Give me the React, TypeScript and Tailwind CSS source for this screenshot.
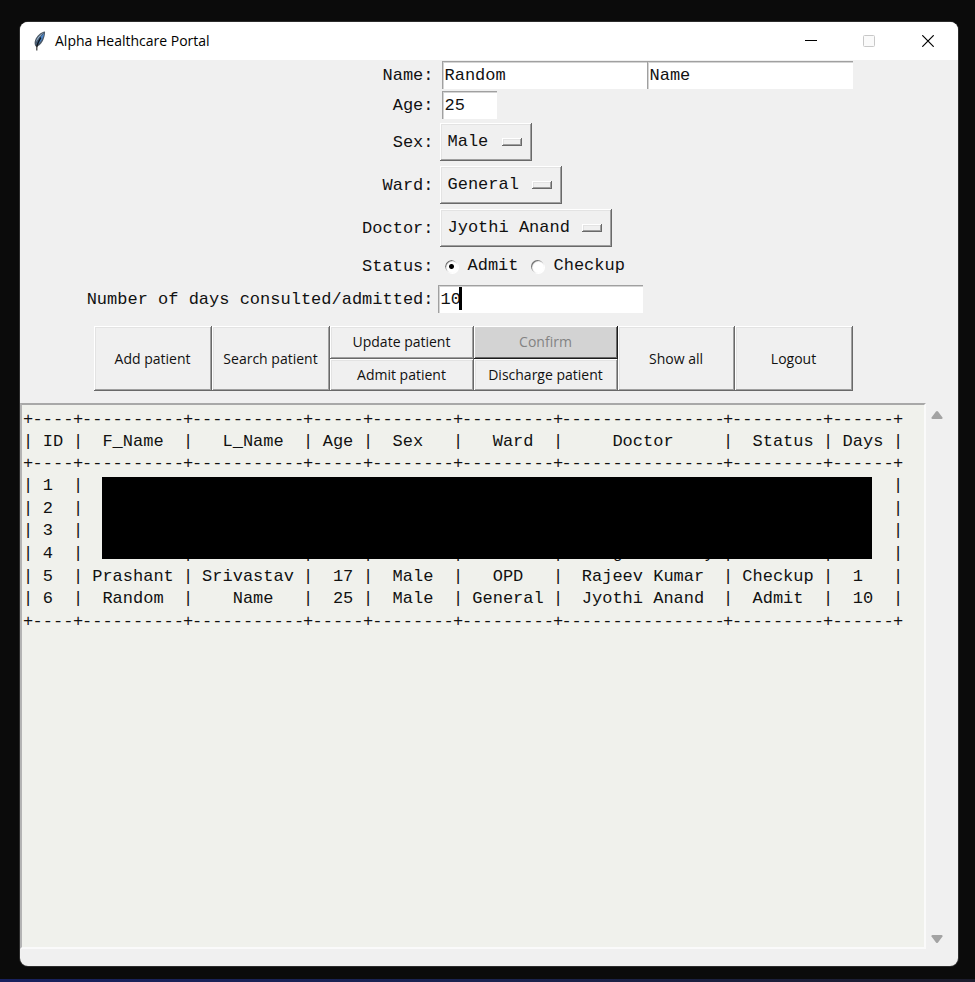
import { useState } from "react";
import type { ReactNode } from "react";

const raised =
  "bg-[#f0f0f0] shadow-[inset_-1px_-1px_#696969,inset_1px_1px_#ffffff,inset_-2px_-2px_#a0a0a0,inset_2px_2px_#e3e3e3]";
const sunken =
  "h-7 rounded-none border-0 bg-white pl-[3px] outline-none shadow-[inset_1px_1px_#a0a0a0,inset_2px_2px_#d4d4d4]";
const mono = "font-['Liberation_Mono',monospace] text-[17px] leading-[22px]";

const widths = [
  "w-[40px]",
  "w-[100px]",
  "w-[110px]",
  "w-[50px]",
  "w-[80px]",
  "w-[90px]",
  "w-[160px]",
  "w-[90px]",
  "w-[60px]",
];
const lengths = [4, 10, 11, 5, 8, 9, 16, 9, 6];

const heading = [" ID ", "  F_Name  ", "   L_Name  ", " Age ", "  Sex   ", "   Ward  ", "     Doctor     ", "  Status ", " Days "];
const rows = [
  [" 1  ", "", "", "", "", "", "", "", ""],
  [" 2  ", "", "", "", "", "", "", "", ""],
  [" 3  ", "", "", "", "", "", "", "", ""],
  [" 4  ", "", "", "", "", "", "     g        y ", "", ""],
  [" 5  ", " Prashant ", " Srivastav ", "  17 ", "  Male  ", "   OPD   ", "  Rajeev Kumar  ", " Checkup ", "  1   "],
  [" 6  ", "  Random  ", "    Name   ", "  25 ", "  Male  ", " General ", "  Jyothi Anand  ", "  Admit  ", "  10  "],
];

function Line({ cells, mark, head }: { cells: string[]; mark: string; head?: boolean }) {
  const Cell = head ? "th" : "td";
  return (
    <tr>
      <td className="w-[10px] p-0">{mark}</td>
      {cells.map((cell, i) => [
        <Cell key={"c" + i} className="p-0 font-normal">
          <div className="flex justify-center whitespace-pre">{cell || " "}</div>
        </Cell>,
        <td key={"m" + i} className="p-0">
          {mark}
        </td>,
      ])}
    </tr>
  );
}

function Rule() {
  return <Line mark="+" cells={lengths.map((n) => "-".repeat(n))} />;
}

function Row({ label, id, height, children }: { label: string; id: string; height: string; children: ReactNode }) {
  return (
    <div className={"grid grid-cols-[344px_1fr] items-center " + height}>
      <label htmlFor={id} className="flex justify-end whitespace-nowrap pr-1 pt-0.5">
        {label}
      </label>
      <div className="flex items-center">{children}</div>
    </div>
  );
}

function Menu({ id, width, options }: { id: string; width: string; options: string[] }) {
  return (
    <div className={"relative ml-[2px] h-[38px] " + width}>
      <select id={id} className={"h-full w-full appearance-none rounded-none pl-2 pt-px outline-none " + raised}>
        {options.map((o) => (
          <option key={o}>{o}</option>
        ))}
      </select>
      <span className={"pointer-events-none absolute right-[10px] top-[15px] h-2 w-5 " + raised} />
    </div>
  );
}

function Radio({ id, label, checked, onChange }: { id: string; label: string; checked: boolean; onChange: () => void }) {
  return (
    <span className="flex items-center">
      <input
        id={id}
        type="radio"
        name="status"
        checked={checked}
        onChange={onChange}
        className="h-[13px] w-[13px] appearance-none rounded-full bg-white shadow-[inset_1px_1px_1px_#696969,1px_1px_#ffffff] checked:bg-[radial-gradient(circle,#000_0_2px,#fff_3px)]"
      />
      <label htmlFor={id} className="pl-[10px]">
        {label}
      </label>
    </span>
  );
}

function PushButton({ children, className = "" }: { children: ReactNode; className?: string }) {
  return (
    <button type="button" className={"whitespace-nowrap " + raised + " " + className}>
      {children}
    </button>
  );
}

export default function App() {
  const [status, setStatus] = useState("admit");
  return (
    <div className="flex min-h-screen flex-col bg-[#0b0b0b] pt-[22px] text-[#111]">
      <main className="ml-5 mr-[17px] flex flex-1 flex-col overflow-hidden rounded-lg bg-[#f0f0f0] shadow-[0_0_0_1px_#2c2c2c]">
        <header className="flex h-[38px] items-center bg-white font-['Open_Sans',sans-serif] text-sm text-black">
          <svg className="ml-[13px] h-[20px] w-[14px]" viewBox="0 0 14 20" aria-hidden="true">
            <path d="M12 .4C8 1 3.500 4.500 2 9.500c-.7 2.300-.4 4 .5 5.800l1.500.3c3-1 5.800-4.300 7-8.600C11.700 4.800 12.300 2.500 12 .4z" fill="#4d5a68" />
            <path d="M11.200 1.500C7.500 3 4 6.500 3 11c2-3.500 4.500-7 8.200-9.500z" fill="#a5c3e0" />
            <path d="M11.300 2.200C7.800 5 4.800 8.500 3.200 13.800c3-1 5.500-3.800 6.700-7.300.6-1.500 1.200-3 1.400-4.300z" fill="#4a86cc" />
            <path d="M7.800 6.500C6 9.500 4.300 12.500 3.600 16" fill="none" stroke="#101820" strokeWidth="1.500" />
            <path d="M3.800 14.500V19.500" fill="none" stroke="#3a3a3a" strokeWidth="1.200" />
          </svg>
          <h1 className="flex-1 pl-2">Alpha Healthcare Portal</h1>
          <button type="button" aria-label="Minimize" className="flex h-full w-[58px] items-center justify-center">
            <svg className="h-3 w-3" viewBox="0 0 12 12" stroke="#000">
              <path d="M0 5.500H12" />
            </svg>
          </button>
          <button type="button" aria-label="Maximize" disabled className="flex h-full w-[58px] items-center justify-center">
            <svg className="h-3 w-3" viewBox="0 0 12 12" fill="#fafafa" stroke="#c8c8c8">
              <rect x=".5" y=".5" width="11" height="11" rx="1" />
            </svg>
          </button>
          <button type="button" aria-label="Close" className="flex h-full w-[60px] items-center justify-center">
            <svg className="h-3 w-3" viewBox="0 0 12 12" stroke="#000" strokeWidth="1.200">
              <path d="M.3.3 11.700 11.700M11.700.3.3 11.700" />
            </svg>
          </button>
        </header>

        <form className={"mr-8 flex flex-col items-center " + mono}>
          <div className="w-[759px]">
            <Row label="Name:" id="first" height="h-[30px]">
              <input id="first" defaultValue="Random" className={"ml-1 w-[205px] " + sunken} />
              <input aria-label="Last name" defaultValue="Name" className={"w-[206px] " + sunken} />
            </Row>
            <Row label="Age:" id="age" height="h-[30px]">
              <input id="age" defaultValue="25" className={"ml-1 w-[55px] " + sunken} />
            </Row>
            <Row label="Sex:" id="sex" height="h-[43px]">
              <Menu id="sex" width="w-[92px]" options={["Male", "Female"]} />
            </Row>
            <Row label="Ward:" id="ward" height="h-[43px]">
              <Menu id="ward" width="w-[122px]" options={["General", "OPD"]} />
            </Row>
            <Row label="Doctor:" id="doctor" height="h-[43px]">
              <Menu id="doctor" width="w-[172px]" options={["Jyothi Anand", "Rajeev Kumar"]} />
            </Row>
            <Row label="Status:" id="admit" height="h-[34px]">
              <div className="flex gap-3 pl-[7px]">
                <Radio id="admit" label="Admit" checked={status === "admit"} onChange={() => setStatus("admit")} />
                <Radio id="checkup" label="Checkup" checked={status === "checkup"} onChange={() => setStatus("checkup")} />
              </div>
            </Row>
            <Row label="Number of days consulted/admitted:" id="days" height="h-[32px]">
              <div className="relative">
                <input id="days" defaultValue="10" className={"block w-[205px] " + sunken} />
                <span className="absolute left-[21px] top-[2px] h-[23px] w-[3px] bg-black" />
              </div>
            </Row>
          </div>
          <div className="mt-[11px] grid h-[65px] w-[759px] grid-cols-[118px_118px_144px_144px_117px_118px] grid-rows-2 font-['Open_Sans',sans-serif] text-sm">
            <PushButton className="row-span-2">Add patient</PushButton>
            <PushButton className="row-span-2">Search patient</PushButton>
            <PushButton>Update patient</PushButton>
            <button
              type="button"
              disabled
              className="bg-[#d3d3d3] text-[#838383] shadow-[inset_-1px_-1px_#1c1c1c,inset_1px_1px_#ffffff,inset_-2px_-2px_#696969]"
            >
              Confirm
            </button>
            <PushButton className="row-span-2">Show all</PushButton>
            <PushButton className="row-span-2">Logout</PushButton>
            <PushButton>Admit patient</PushButton>
            <PushButton>Discharge patient</PushButton>
          </div>
        </form>

        <div className="mb-[17px] mt-3 flex flex-1">
          <section className="relative flex-1 border-2 border-b-[#fafafa] border-l-[#b4b4b4] border-r-[#fafafa] border-t-[#a8a8a8] bg-[#f0f1ec] pl-px pt-1">
            <table className={"h-[224px] w-[880px] table-fixed border-collapse " + mono}>
              <colgroup>
                <col className="w-[10px]" />
                {widths.map((w, i) => [<col key={i} className={w} />, <col key={i + "m"} className="w-[10px]" />])}
              </colgroup>
              <thead>
                <Rule />
                <Line head mark="|" cells={heading} />
                <Rule />
              </thead>
              <tbody>
                {rows.map((r) => (
                  <Line key={r[0]} mark="|" cells={r} />
                ))}
                <Rule />
              </tbody>
            </table>
            <div className="absolute left-20 top-[72px] h-[82px] w-[770px] bg-black" />
          </section>
          <div className="mr-[11px] flex w-[21px] flex-col items-center justify-between pb-[6px] pt-2">
            <button type="button" aria-label="Scroll up">
              <svg className="block h-2 w-3" viewBox="0 0 12 8" fill="#a3a3a3">
                <path d="M5 .6Q6-.4 7 .6L11.500 6.500Q11.800 8 10.500 8H1.500Q.2 8 .5 6.500z" />
              </svg>
            </button>
            <button type="button" aria-label="Scroll down">
              <svg className="block h-2 w-3 rotate-180" viewBox="0 0 12 8" fill="#a3a3a3">
                <path d="M5 .6Q6-.4 7 .6L11.500 6.500Q11.800 8 10.500 8H1.500Q.2 8 .5 6.500z" />
              </svg>
            </button>
          </div>
        </div>
      </main>
      <footer className="mt-[13px] h-[3px] bg-linear-to-r from-[#18215e] via-[#1a2350] to-[#1c1c2c]" />
    </div>
  );
}
